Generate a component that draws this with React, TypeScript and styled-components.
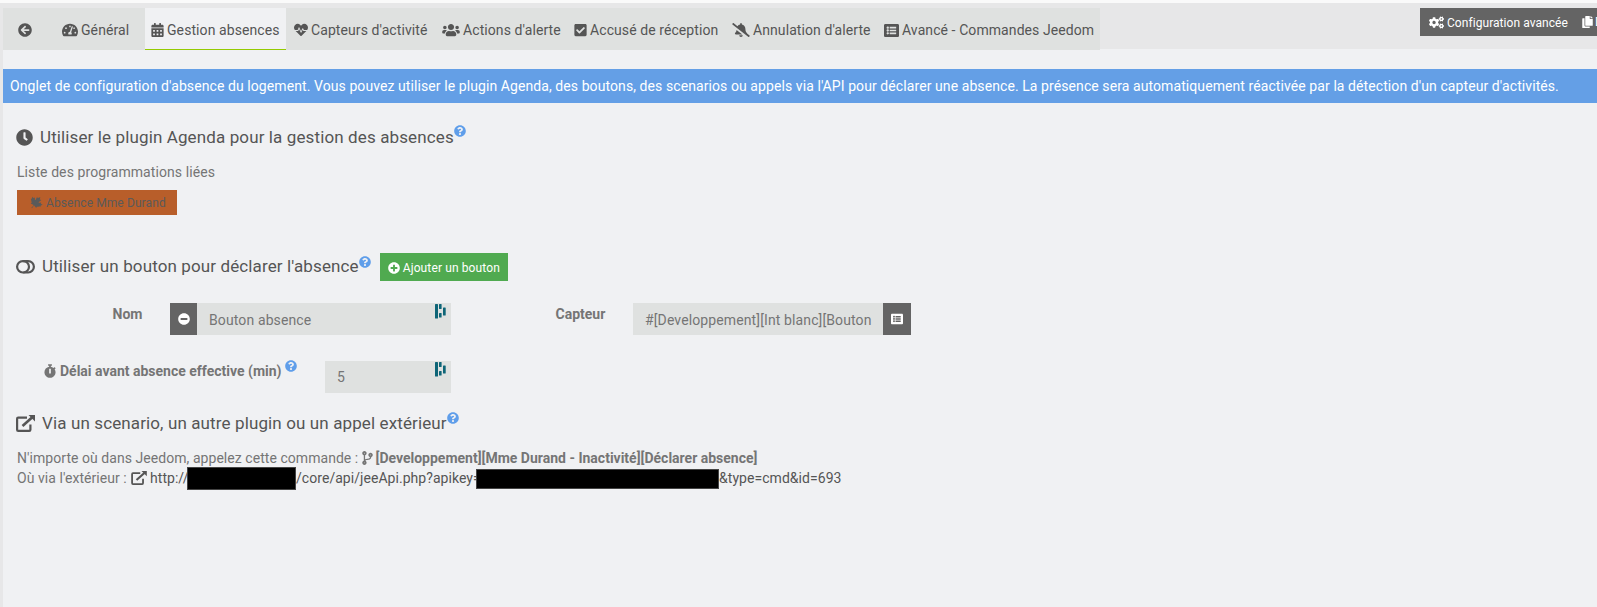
import React from "react";
import styled, { createGlobalStyle } from "styled-components";
import {
  FaArrowCircleLeft, FaTachometerAlt, FaCalendarAlt, FaHeartbeat, FaUsers, FaCheckSquare,
  FaBellSlash, FaListAlt, FaCogs, FaCopy, FaClock, FaCanadianMapleLeaf, FaCodeBranch,
  FaStopwatch, FaMinusCircle, FaPlusCircle, FaQuestionCircle,
} from "react-icons/fa";

const Global = createGlobalStyle`
  * { box-sizing: border-box; }
  body {
    margin: 0;
    background: #f0f1f3;
    font: 14px/20px Roboto, sans-serif;
    letter-spacing: 0.083px;
    color: #757575;
    overflow: hidden;
  }
`;

const Page = styled.div`
  height: 607px;
  border-top: 3px solid #fafafa;
  overflow: hidden;
`;
const Body = styled.div`
  height: 604px;
  border-left: 3px solid #e7e7e8;
`;
const TopBar = styled.header`
  display: flex;
  justify-content: space-between;
  align-items: flex-start;
  height: 47px;
  padding-top: 5px;
  background: linear-gradient(#e7e7e8, #e7e7e8) 0 0 / 100% 46px no-repeat;
`;
const Tabs = styled.nav`
  display: flex;
  width: 1097px;
  height: 42px;
  background: #dfe1e0;
  color: #555;
`;
const Tab = styled.a<{ $w: number; $active?: boolean; $left?: number }>`
  display: flex;
  align-items: center;
  flex: none;
  width: ${(p) => p.$w}px;
  padding: 2px 0 0 ${(p) => p.$left ?? 7}px;
  white-space: nowrap;
  ${(p) => p.$active && `
    background: #f0f1f3;
    border-bottom: 1px solid #94ca02;
    margin-right: 1px;
    padding-top: 3px;
  `}
`;
const Glyph = styled.span<{ $w: number; $h: number; $gap?: number; $color?: string; $turn?: number }>`
  display: inline-flex;
  flex: none;
  width: ${(p) => p.$w}px;
  height: ${(p) => p.$h}px;
  margin-right: ${(p) => p.$gap ?? 0}px;
  color: ${(p) => p.$color ?? "inherit"};
  svg {
    width: 100%;
    height: 100%;
    display: block;
    overflow: visible;
    transform: rotate(${(p) => p.$turn ?? 0}deg);
  }
`;
const Actions = styled.div`
  display: flex;
  align-items: center;
  width: 177px;
  height: 28px;
  padding-left: 9px;
  background: #646464;
  color: #fff;
  font-size: 12px;
  letter-spacing: 0.06px;
  white-space: nowrap;
  overflow: hidden;
`;
const ActionLabel = styled.span`
  flex: none;
  width: 135px;
  padding-top: 1px;
`;
const Alert = styled.div`
  height: 34px;
  margin-top: 19px;
  padding: 7px 7px 0;
  background: #649fe6;
  color: #fff;
  white-space: nowrap;
`;
const Legend = styled.h3<{ $top: number; $h: number }>`
  display: flex;
  align-items: center;
  height: ${(p) => p.$h}px;
  margin: ${(p) => p.$top}px 0 0;
  padding-left: 13px;
  font-size: 17px;
  font-weight: 400;
  letter-spacing: 0.12px;
  color: #555;
  white-space: nowrap;
`;
const LegendText = styled.span<{ $raise?: number }>`
  padding-bottom: ${(p) => (p.$raise ?? 0) * 2}px;
`;
const Help = styled.sup<{ $gap?: number; $below?: number }>`
  display: flex;
  width: 12px;
  height: 12px;
  margin: 0 0 ${(p) => p.$below ?? 10}px ${(p) => p.$gap ?? 0}px;
  color: #5f9eea;
  svg { width: 12px; height: 12px; }
`;
const Paragraph = styled.p<{ $top?: number }>`
  display: flex;
  align-items: center;
  height: 20px;
  margin: ${(p) => p.$top ?? 0}px 0 0;
  padding-left: 14px;
  white-space: pre;
`;
const Intro = styled.span<{ $w: number }>`
  flex: none;
  width: ${(p) => p.$w}px;
  letter-spacing: 0.05px;
`;
const EventTag = styled.a`
  display: flex;
  align-items: center;
  width: 160px;
  height: 25px;
  margin: 8px 0 0 14px;
  padding-left: 12px;
  background: #b85e2a;
  color: #5a5a5a;
  font-size: 12px;
  letter-spacing: 0.1px;
  white-space: nowrap;
`;
const AddButton = styled.button`
  display: flex;
  align-items: center;
  width: 128px;
  height: 28px;
  margin-left: 9px;
  padding: 1px 0 0 8px;
  border: 0;
  background: #50aa50;
  color: #fff;
  font: 12px Roboto, sans-serif;
  letter-spacing: 0.12px;
  white-space: nowrap;
`;
const FormRow = styled.div<{ $top: number }>`
  display: flex;
  height: 32px;
  margin-top: ${(p) => p.$top}px;
`;
const Label = styled.label<{ $left: number; $w: number; $h?: number }>`
  display: flex;
  align-items: center;
  flex: none;
  height: ${(p) => p.$h ?? 22}px;
  width: ${(p) => p.$w}px;
  padding-left: ${(p) => p.$left}px;
  font-weight: 700;
  letter-spacing: 0;
  white-space: nowrap;
`;
const Field = styled.div<{ $w: number; $pad?: number }>`
  display: flex;
  justify-content: space-between;
  width: ${(p) => p.$w}px;
  height: 32px;
  padding: ${(p) => p.$pad ?? 7}px 5px 0 12px;
  background: #dfe1e0;
  letter-spacing: 0.12px;
  white-space: nowrap;
`;
const Addon = styled.button<{ $w: number }>`
  display: flex;
  align-items: center;
  justify-content: center;
  width: ${(p) => p.$w}px;
  height: 32px;
  padding: 0;
  border: 0;
  background: #646464;
  color: #fff;
`;
const Badge = styled.svg<{ $lift?: number }>`
  width: 11px;
  height: 16px;
  margin-top: -${(p) => p.$lift ?? 7}px;
`;
const Redacted = styled.span<{ $w: number; $h: number; $drop?: number }>`
  flex: none;
  width: ${(p) => p.$w}px;
  height: ${(p) => p.$h}px;
  margin-top: ${(p) => p.$drop ?? 0}px;
  background: #000;
  border: 1px solid #444;
`;
const Url = styled.span<{ $w?: number }>`
  flex: none;
  width: ${(p) => (p.$w ? `${p.$w}px` : "auto")};
  color: #555;
  letter-spacing: 0.05px;
`;
const Command = styled.strong`
  font-weight: 700;
  letter-spacing: 0;
`;

const ManagerBadge = ({ lift }: { lift?: number }) => (
  <Badge $lift={lift} viewBox="0 0 11 16" fill="#0e6577">
    <rect x="0" y="1" width="3" height="14.5" rx=".6" />
    <rect x="4" y="1" width="2.6" height="5" rx=".6" />
    <rect x="4" y="10" width="2.6" height="4.6" rx=".6" />
    <rect x="8" y="4.5" width="2.7" height="8" rx=".6" />
  </Badge>
);
const Toggle = () => (
  <svg viewBox="0 0 19 14" fill="none" stroke="currentColor" strokeWidth="2.2">
    <rect x="1.1" y="1.1" width="16.8" height="11.4" rx="5.7" />
    <path d="M7.3 1.1A5.7 5.7 0 0 1 7.3 12.5" />
  </svg>
);
const ExternalLink = () => (
  <svg viewBox="0 0 19 17" fill="none" stroke="currentColor" strokeWidth="2.2">
    <path d="M11 2.6H2.2Q1.1 2.6 1.1 3.8V14.7Q1.1 15.9 2.2 15.9H13.3Q14.4 15.9 14.4 14.7V9.5" />
    <path d="M6.5 11L16 2.5" strokeWidth="2.6" />
    <path d="M12.5 0H19V6.5Z" fill="currentColor" stroke="none" />
  </svg>
);

export default function App() {
  return (
    <>
      <Global />
      <Page>
        <Body>
          <TopBar>
            <Tabs>
              <Tab $w={52} $left={15}><Glyph $w={14} $h={14}><FaArrowCircleLeft /></Glyph></Tab>
              <Tab $w={90}><Glyph $w={16} $h={16} $gap={3}><FaTachometerAlt /></Glyph>Général</Tab>
              <Tab $w={141} $active $left={6}><Glyph $w={13} $h={14} $gap={3}><FaCalendarAlt /></Glyph>Gestion absences</Tab>
              <Tab $w={148}><Glyph $w={14} $h={14} $gap={3}><FaHeartbeat /></Glyph>Capteurs d'activité</Tab>
              <Tab $w={132}><Glyph $w={18} $h={14} $gap={3}><FaUsers /></Glyph>Actions d'alerte</Tab>
              <Tab $w={158}><Glyph $w={13} $h={14} $gap={3}><FaCheckSquare /></Glyph>Accusé de réception</Tab>
              <Tab $w={152}><Glyph $w={18} $h={14} $gap={3}><FaBellSlash /></Glyph>Annulation d'alerte</Tab>
              <Tab $w={220}><Glyph $w={15} $h={15} $gap={3}><FaListAlt /></Glyph>Avancé - Commandes Jeedom</Tab>
            </Tabs>
            <Actions>
              <Glyph $w={15} $h={13} $gap={3}><FaCogs /></Glyph>
              <ActionLabel>Configuration avancée</ActionLabel>
              <Glyph $w={11} $h={12} $gap={2}><FaCopy /></Glyph>
              Dupliquer
            </Actions>
          </TopBar>
          <Alert>
            Onglet de configuration d'absence du logement. Vous pouvez utiliser le plugin Agenda, des boutons, des scenarios ou appels via l'API pour déclarer une absence. La présence sera automatiquement réactivée par la détection d'un capteur d'activités.
          </Alert>

          <Legend $top={16} $h={36}>
            <Glyph $w={17} $h={19} $gap={7}><FaClock /></Glyph>
            <LegendText>Utiliser le plugin Agenda pour la gestion des absences</LegendText>
            <Help $below={12}><FaQuestionCircle /></Help>
          </Legend>
          <Paragraph $top={7}>Liste des programmations liées</Paragraph>
          <EventTag>
            <Glyph $w={14} $h={15} $gap={3} $turn={38}><FaCanadianMapleLeaf /></Glyph>
            Absence Mme Durand
          </EventTag>

          <Legend $top={38} $h={28}>
            <Glyph $w={19} $h={16} $gap={7}><Toggle /></Glyph>
            <LegendText $raise={1}>Utiliser un bouton pour déclarer l'absence</LegendText>
            <Help><FaQuestionCircle /></Help>
            <AddButton>
              <Glyph $w={12} $h={12} $gap={3}><FaPlusCircle /></Glyph>
              Ajouter un bouton
            </AddButton>
          </Legend>
          <FormRow $top={22}>
            <Label $left={109.5} $w={167}>Nom</Label>
            <Addon $w={27}><Glyph $w={12} $h={12}><FaMinusCircle /></Glyph></Addon>
            <Field $w={254}>Bouton absence<ManagerBadge /></Field>
            <Label $left={104.5} $w={182}>Capteur</Label>
            <Field $w={250}>#[Developpement][Int blanc][Bouton</Field>
            <Addon $w={28}><Glyph $w={12} $h={12}><FaListAlt /></Glyph></Addon>
          </FormRow>
          <FormRow $top={26}>
            <Label $left={41} $w={322} $h={20}>
              <Glyph $w={12} $h={14} $gap={4}><FaStopwatch /></Glyph>
              Délai avant absence effective (min)
              <Help $gap={3}><FaQuestionCircle /></Help>
            </Label>
            <Field $w={126} $pad={6}>5<ManagerBadge lift={6} /></Field>
          </FormRow>

          <Legend $top={20} $h={20}>
            <Glyph $w={19} $h={17} $gap={7}><ExternalLink /></Glyph>
            <LegendText>Via un scenario, un autre plugin ou un appel extérieur</LegendText>
            <Help $below={11}><FaQuestionCircle /></Help>
          </Legend>
          <Paragraph $top={15}>
            <Intro $w={344.5}>{"N'importe où dans Jeedom, appelez cette commande : "}</Intro>
            <Glyph $w={11} $h={14} $gap={3}><FaCodeBranch /></Glyph>
            <Command>[Developpement][Mme Durand - Inactivité][Déclarer absence]</Command>
          </Paragraph>
          <Paragraph>
            <Intro $w={114}>{"Où via l'extérieur : "}</Intro>
            <Glyph $w={16} $h={14} $gap={3} $color="#555"><ExternalLink /></Glyph>
            <Url $w={37}>http://</Url>
            <Redacted $w={109} $h={23} />
            <Url $w={180}>/core/api/jeeApi.php?apikey=</Url>
            <Redacted $w={243} $h={20} $drop={2} />
            <Url>&amp;type=cmd&amp;id=693</Url>
          </Paragraph>
        </Body>
      </Page>
    </>
  );
}
